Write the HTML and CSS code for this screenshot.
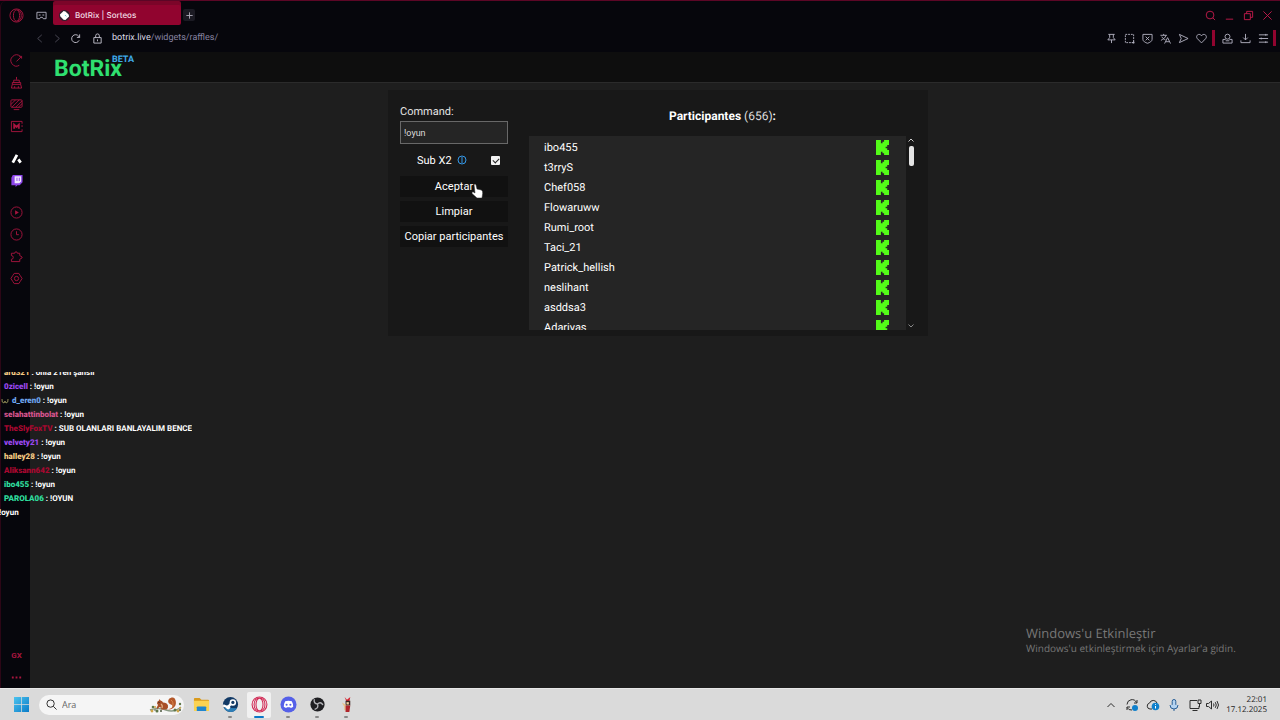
FILE: index.html
```html
<!DOCTYPE html>
<html lang="es">
<head>
  <meta charset="UTF-8">
  <meta name="viewport" content="width=device-width, initial-scale=1">
  <title>BotRix | Sorteos</title>
  <link rel="stylesheet" href="styles.css">
</head>
<body>

<!-- Shared shapes -->
<svg class="defs" aria-hidden="true">
  <symbol id="kick" viewBox="1 0 22 24" preserveAspectRatio="none">
    <path d="M1 0h8.300v5.300H12V2.700h2.700V0H23v8h-3v2.700h-2.700v2.600H20V16h3v8h-8.300v-2.700H12v-2.600H9.300V24H1z"/>
  </symbol>
  <symbol id="opera" viewBox="0 0 16 16">
    <circle cx="8" cy="8" r="7"/>
    <ellipse cx="8" cy="8" rx="3.3" ry="6"/>
    <path d="M9.5 2.2c2.5.8 3.6 3 3.6 5.800s-1.100 5-3.600 5.800"/>
  </symbol>
</svg>

<div class="browser">

  <!-- Sidebar -->
  <nav class="sidebar" aria-label="Sidebar">
    <button class="side logo" aria-label="Opera menu"><svg viewBox="0 0 16 16"><use href="#opera"/></svg></button>
    <button class="side" aria-label="GX Control"><svg viewBox="0 0 14 14"><path d="M10 12.200A6 6 0 1 1 11 2.500M7 8l5-5M12.500 5v-2.500H10"/></svg></button>
    <button class="side" aria-label="Cleaner"><svg viewBox="0 0 14 14"><path d="M7 1v3M4 7V4.500h6V7M2.500 9V7h9v2M2.500 9L1.500 13h11l-1-4zM5 13v-2M9 13v-2"/></svg></button>
    <button class="side" aria-label="Wallpaper"><svg viewBox="0 0 14 14"><rect x="1" y="2" width="12" height="8" rx="1"/><path d="M1 7l5-5M2 10l8-8M6 10l7-7M9 10l4-4M4 12.500h6"/></svg></button>
    <button class="side" aria-label="Mods"><svg viewBox="0 0 14 14"><path d="M13 4V1.500H1.500v11H13V10M12 6.500h2"/><path class="heavy" d="M4.500 9.500V5L7 7.500 9.500 5v4.500"/></svg></button>
    <button class="side gap-m white" aria-label="Aria"><svg viewBox="0 0 14 14"><path class="thick" d="M3 11.500L7.500 3M9 8l2.500 3.500"/></svg></button>
    <button class="side twitch" aria-label="Twitch"><svg viewBox="0 0 14 14"><path class="tw-bg" d="M3 1h10.500v8L10.500 12H8l-2 2v-2H1.500V4z"/><path class="tw-face" d="M5 2.500h7v5.500L10 10H5z"/><path class="tw-eye" d="M7.500 4v3.500M10 4v3.500"/></svg></button>
    <button class="side gap-m" aria-label="Player"><svg viewBox="0 0 14 14"><circle cx="7" cy="7" r="6"/><path class="solid" d="M5.500 4.500v5L9.500 7z"/></svg></button>
    <button class="side" aria-label="History"><svg viewBox="0 0 14 14"><circle cx="7" cy="7" r="6"/><path d="M7 3.500V7.200h2.500"/></svg></button>
    <button class="side" aria-label="Extensions"><svg viewBox="0 0 14 14"><path d="M1.500 3.500h3.500a1.500 1.500 0 0 1 3 0h2.500v2.500l2.500 1.500v1l-2.500 1.500v2.500h-9V10a2 2 0 0 0 0-4z"/></svg></button>
    <button class="side" aria-label="Settings"><svg viewBox="0 0 14 14"><path d="M4.500 1.500h5L11 3.800 13 7l-2 3.200-1.500 2.300h-5L3 10.200 1 7l2-3.200z"/><circle cx="7" cy="7" r="2.300"/></svg></button>
    <button class="side gx" aria-label="GX Corner">GX</button>
    <button class="side" aria-label="More"><svg viewBox="0 0 14 14"><path class="dots" d="M2 7h2M6 7h2M10 7h2"/></svg></button>
  </nav>

  <div class="window">

    <!-- Tabs -->
    <div class="tabs">
      <button class="icon workspace" aria-label="Workspaces"><svg viewBox="0 0 12 12"><path d="M1 2.500h10v7H8L7 8H5L4 9.500H1zM3 5.500h2M7 5.500h2"/></svg></button>
      <div class="tab">
        <svg class="favicon" viewBox="0 0 12 12"><circle cx="6" cy="6" r="6" fill="#33202e"/><path d="M5 1l2 .5L10.500 5l.5 2L7 11 5 10.500 1.500 7 1 5z" fill="#fff"/><path d="M6.500 5.500L8 7" stroke="#56c8d0"/></svg>
        <span>BotRix | Sorteos</span>
      </div>
      <button class="new-tab" aria-label="New tab"><svg viewBox="0 0 10 10"><path d="M5 1.500v7M1.500 5h7"/></svg></button>
      <div class="controls">
        <button class="icon" aria-label="Search tabs"><svg viewBox="0 0 12 12"><circle cx="5.500" cy="5.500" r="4.200"/><path d="M8.500 8.500L11 11"/></svg></button>
        <button class="icon" aria-label="Minimize"><svg viewBox="0 0 12 12"><path d="M2 10h8"/></svg></button>
        <button class="icon" aria-label="Restore"><svg viewBox="0 0 12 12"><path d="M1.500 4h6.500v6.500H1.500zM4 4V1.500h6.500V8H8"/></svg></button>
        <button class="icon" aria-label="Close"><svg viewBox="0 0 12 12"><path d="M1.500 1.500l9 9M10.500 1.500l-9 9"/></svg></button>
      </div>
    </div>

    <!-- Address bar -->
    <div class="toolbar">
      <div class="history">
        <button class="icon dim" aria-label="Back"><svg viewBox="0 0 12 12"><path d="M8.500 2L4 6l4.500 4"/></svg></button>
        <button class="icon dim" aria-label="Forward"><svg viewBox="0 0 12 12"><path d="M3.500 2L8 6l-4.500 4"/></svg></button>
        <button class="icon light" aria-label="Reload"><svg viewBox="0 0 12 12"><path d="M10 8a4.300 4.300 0 1 1-.500-4.500L10.500 4.800M10.500 1.500v3.300H7.500"/></svg></button>
        <button class="icon light lock" aria-label="Site information"><svg viewBox="0 0 12 12"><path d="M2 5h8v6H2zM4 5V3a2 2 0 0 1 4 0v2M6 7v2"/></svg></button>
      </div>
      <a class="url" href="#">botrix.live<span>/widgets/raffles/</span></a>
      <div class="actions">
        <button class="icon" aria-label="Pin"><svg viewBox="0 0 12 12"><path d="M2.500 1.500h7M4 1.500v3.500L2 7.500h8L8 5V1.500M6 7.500V11"/></svg></button>
        <button class="icon" aria-label="Snapshot"><svg viewBox="0 0 12 12"><path stroke-dasharray="2 1" d="M1.500 1.500h9v9h-9z"/><path d="M8.500 10.500h3M10.500 8.500v3"/></svg></button>
        <button class="icon" aria-label="Blocker"><svg viewBox="0 0 12 12"><path d="M1 1.500h10V7c0 2-2.500 3.500-5 4.200C3.500 10.500 1 9 1 7zM4 4l4 4M8 4L4 8"/></svg></button>
        <button class="icon" aria-label="Translate"><svg viewBox="0 0 12 12"><path d="M.5 2.500h7M4 1v1.500M6.500 2.500C6 5 3.500 7 1 8M2 4c1 2 2.500 3 4 3.500M5 11.500L8.300 5l3.200 6.500M6.500 9.500h3.600"/></svg></button>
        <button class="icon" aria-label="Flow"><svg viewBox="0 0 12 12"><path d="M1.500 1.500L11 6l-9.500 4.500L3.500 6z"/></svg></button>
        <button class="icon" aria-label="Bookmark"><svg viewBox="0 0 12 12"><path d="M6 10.800L1.500 6.200C-.3 4 1.200 1.500 3.500 1.500 4.700 1.500 5.500 2.200 6 3c.5-.8 1.300-1.500 2.500-1.500 2.300 0 3.800 2.500 2 4.700z"/></svg></button>
        <i class="bar"></i>
        <button class="icon" aria-label="Profile"><svg viewBox="0 0 12 12"><circle cx="6" cy="4" r="2.700"/><path d="M4 7H1v4h10V7H8M4 8.500h4"/></svg></button>
        <button class="icon" aria-label="Downloads"><svg viewBox="0 0 12 12"><path d="M6 1v6.500M3.500 5L6 7.500 8.500 5M1 8v2.500h10V8"/></svg></button>
        <button class="icon" aria-label="Easy setup"><svg viewBox="0 0 12 12"><path d="M1 2h10M1 6h10M1 10h10M8.500 1v2M3.500 5v2M8.500 9v2"/></svg></button>
        <i class="bar"></i>
      </div>
    </div>

    <!-- BotRix page -->
    <header class="page-header">
      <a class="brand" href="#">BotRix<sup>BETA</sup></a>
    </header>

    <main class="page">
      <section class="card">
        <form class="options">
          <label class="command-label" for="command">Command:</label>
          <input class="command" id="command" type="text" value="!oyun">
          <div class="sub-row">
            <label for="subx2">Sub X2</label>
            <svg class="info" viewBox="0 0 10 10"><circle cx="5" cy="5" r="4"/><path d="M5 2v6"/></svg>
            <input class="check" id="subx2" type="checkbox" checked>
          </div>
          <button class="btn" type="button">Aceptar</button>
          <button class="btn" type="button">Limpiar</button>
          <button class="btn" type="button">Copiar participantes</button>
        </form>

        <div class="participants">
          <h2>Participantes <span>(656)</span>:</h2>
          <div class="list-wrap">
            <ul class="list">
              <li>ibo455<svg><use href="#kick"/></svg></li>
              <li>t3rryS<svg><use href="#kick"/></svg></li>
              <li>Chef058<svg><use href="#kick"/></svg></li>
              <li>Flowaruww<svg><use href="#kick"/></svg></li>
              <li>Rumi_root<svg><use href="#kick"/></svg></li>
              <li>Taci_21<svg><use href="#kick"/></svg></li>
              <li>Patrick_hellish<svg><use href="#kick"/></svg></li>
              <li>neslihant<svg><use href="#kick"/></svg></li>
              <li>asddsa3<svg><use href="#kick"/></svg></li>
              <li>Adariyas<svg><use href="#kick"/></svg></li>
            </ul>
            <div class="scroll">
              <svg viewBox="0 0 8 8"><path d="M1.500 5.500L4 3l2.500 2.500"/></svg>
              <div class="thumb"></div>
              <svg class="down" viewBox="0 0 8 8"><path d="M1.500 2.500L4 5l2.500-2.500"/></svg>
            </div>
          </div>
        </div>
      </section>
    </main>
  </div>
</div>

<!-- Taskbar -->
<footer class="taskbar">
  <button class="start" aria-label="Inicio"><svg viewBox="0 0 16 16">
    <defs><linearGradient id="win" x2="1" y2="1"><stop offset="0" stop-color="#4cc3ee"/><stop offset="1" stop-color="#0a7cc8"/></linearGradient></defs>
    <path fill="url(#win)" d="M0 0h7.600v7.600H0zM8.400 0H16v7.600H8.400zM0 8.400h7.600V16H0zM8.400 8.400H16V16H8.400z"/></svg></button>
  <div class="search">
    <svg class="lens" viewBox="0 0 12 12"><circle cx="5" cy="5" r="4"/><path d="M8 8l3.500 3.500"/></svg>
    <input type="text" placeholder="Ara" aria-label="Ara">
    <svg class="squirrel" viewBox="0 0 34 18">
      <path d="M1 14q8-3 16 0t15-3" stroke="#8a9a84" stroke-width="1.500" fill="none"/>
      <path d="M18 13c5 0 6-2 5-4-3-1-5-3-3-6 2-2 5-2 6 0 2 4 1 9-5 10.500z" fill="#b4592b"/>
      <path d="M22 4q3 2 1.500 7" stroke="#d98a50" stroke-width="1" fill="none"/>
      <path d="M8 7.500Q8 5 10 4.500l.5-1.500 1 1.500q2 .5 2.500 2 4 0 5 3 .5 3-1.500 4h-6l1-1.500-2-1-2 2-1-1 1.500-3z" fill="#a84f28"/>
      <path d="M12 8q2 1.500 1 4" stroke="#e3b083" stroke-width="1.200" fill="none"/>
      <circle cx="10" cy="6.300" r=".6" fill="#222"/>
      <g fill="#5d7648"><circle cx="4" cy="11" r="1.300"/><circle cx="8" cy="15" r="1.500"/><circle cx="26" cy="14" r="1.500"/><circle cx="31" cy="8" r="1.200"/></g>
      <g fill="#cfa548"><circle cx="3" cy="15" r="1.400"/><circle cx="6" cy="11" r="1"/><circle cx="29" cy="15" r="1.400"/><circle cx="31" cy="12" r="1"/></g>
      <g fill="#4b573e"><circle cx="12" cy="15" r="1"/><circle cx="31" cy="14" r="1"/><circle cx="6" cy="14" r=".8"/></g>
    </svg>
  </div>
  <div class="apps">
    <button class="app" aria-label="Explorer"><svg viewBox="0 0 18 18"><path d="M1 3a1 1 0 0 1 1-1h5l2 2h7a1 1 0 0 1 1 1v3H1z" fill="#d99a1c"/><path d="M1 5h16v10a1 1 0 0 1-1 1H2a1 1 0 0 1-1-1z" fill="#fbd352"/><path d="M4 16v-4a1 1 0 0 1 1-1h8a1 1 0 0 1 1 1v4z" fill="#1f86cf"/></svg></button>
    <button class="app running" aria-label="Steam"><svg viewBox="0 0 18 18"><circle cx="9" cy="9" r="8" fill="#123a66"/><path d="M2 12.500A8 8 0 0 0 16 13z" fill="#2d7fb8"/><path d="M1.200 10l5 2 3-3.500" stroke="#fff" stroke-width="2.600" fill="none"/><circle cx="11.500" cy="6.800" r="3.400" fill="#fff"/><circle cx="11.500" cy="6.800" r="1.700" fill="#123a66"/><circle cx="6.500" cy="12" r="2.200" fill="#fff"/></svg></button>
    <button class="app running active" aria-label="Opera GX"><svg class="opera" viewBox="0 0 16 16"><use href="#opera"/><path d="M6.500 2.200C4 3 2.900 5.200 2.900 8s1.100 5 3.600 5.800"/></svg></button>
    <button class="app running" aria-label="Discord"><svg viewBox="0 0 18 18"><circle cx="9" cy="9" r="8.500" fill="#5560e8"/><path d="M5.500 5.500Q9 4.300 12.500 5.500 14 8 14 11.500q-1.200 1-2.600 1.300l-.7-1q-1.700.4-3.400 0l-.7 1Q5.200 12.500 4 11.500 4 8 5.500 5.500z" fill="#fff"/><circle cx="7" cy="9.200" r="1.100" fill="#5560e8"/><circle cx="11" cy="9.200" r="1.100" fill="#5560e8"/></svg></button>
    <button class="app running" aria-label="OBS"><svg viewBox="0 0 18 18"><circle cx="9" cy="9" r="7.500" fill="#1f1f22"/><path d="M9 8.500Q5 8 5.500 4M9 8.500q1.500 4-2.500 5.500M9 8.500q3-3 5.500.500" stroke="#b4b4b8" stroke-width="1.400" fill="none" stroke-linecap="round"/></svg></button>
    <button class="app running" aria-label="Game"><svg viewBox="0 0 18 18"><path d="M7 1l2.500 3L13 1l-1 5H9z" fill="#d3222e"/><path d="M8 5h5v5H8z" fill="#3a2622"/><path d="M4 7l4 2v6H6.500V11z" fill="#e9c28a"/><path d="M8 10h5l-1 7H8z" fill="#b0242a"/><path d="M9 6.500h2.500v2.500H9z" fill="#efd09c"/></svg></button>
  </div>
  <div class="tray">
    <svg viewBox="0 0 14 14"><path d="M3.500 9L7 5.500 10.500 9"/></svg>
    <svg viewBox="0 0 14 14"><path d="M2 6.500A5 5 0 0 1 11.500 4.500M12 2v3H9M2 12V9h3M2 9.500A5 5 0 0 0 7 12"/><circle class="badge" cx="10" cy="10" r="3"/></svg>
    <svg viewBox="0 0 14 14"><path d="M6 11H4a3 3 0 0 1-.500-5.900A4 4 0 0 1 11 5"/><circle class="badge" cx="9.500" cy="8.500" r="3.800"/><path class="mark" d="M9.500 8v2.500M9.500 6.200v.8"/></svg>
    <svg class="mic" viewBox="0 0 14 14"><rect x="5.200" y="1.500" width="3.600" height="7" rx="1.800"/><path d="M3 7a4 4 0 0 0 8 0M7 11v2"/></svg>
    <svg viewBox="0 0 14 14"><path d="M9 2.500H2v8h9V8M4.500 12.500h5M10 2h3v3.500h-3zM11.500 5.500V9"/></svg>
    <svg viewBox="0 0 14 14"><path d="M1.500 5.500h2L6.500 3v8L3.500 8.500h-2zM8.500 5.500q1 1.500 0 3M10.300 4.200q2 2.800 0 5.600M12 3q3 4 0 8"/></svg>
  </div>
  <time class="clock" datetime="2025-12-17T22:01">22:01<br>17.12.2025</time>
</footer>

<!-- Stream chat overlay -->
<div class="chat">
  <p><b class="sand">ard321</b> : onla 21en şanslı</p>
  <p><b class="violet">0zicell</b> : !oyun</p>
  <p class="badged"><svg viewBox="0 0 8 8"><path d="M1 2q-.5 4 2 4l1-2 1 2q2.500 0 2-4"/></svg><b class="blue">d_eren0</b> : !oyun</p>
  <p><b class="pink">selahattinbolat</b> : !oyun</p>
  <p><b class="red">TheSlyFoxTV</b> : SUB OLANLARI BANLAYALIM BENCE</p>
  <p><b class="violet">velvety21</b> : !oyun</p>
  <p><b class="sand">halley28</b> : !oyun</p>
  <p><b class="red">Aliksann642</b> : !oyun</p>
  <p><b class="mint">ibo455</b> : !oyun</p>
  <p><b class="mint">PAROLA06</b> : !OYUN</p>
  <p class="wrapped">!oyun</p>
</div>

<!-- Windows watermark -->
<div class="watermark">
  <p class="wm-title">Windows'u Etkinleştir</p>
  <p>Windows'u etkinleştirmek için Ayarlar'a gidin.</p>
</div>

<!-- Mouse pointer -->
<svg class="pointer" viewBox="0 0 12 16"><path d="M3 1.500Q4.200.3 5 1.800L6 6l4.500 1Q12 8 11.700 10.500L11 15H6L1 10.500Q.5 9 2 8.800L4 10z" fill="#fff" stroke="#222" stroke-width=".5"/></svg>

</body>
</html>
```

FILE: styles.css
```css
* {
  margin: 0;
  padding: 0;
  box-sizing: border-box;
}

body {
  font-family: Roboto, "Liberation Sans", sans-serif;
  font-size: 11px;
  text-rendering: geometricPrecision;
  background: #1e1e1e;
  color: #fff;
  height: 100vh;
  overflow: hidden;
  display: flex;
  flex-direction: column;
  position: relative;
}

button {
  font: inherit;
  color: inherit;
  background: none;
  border: none;
  cursor: pointer;
}

a {
  color: inherit;
  text-decoration: none;
}

svg {
  display: block;
  fill: none;
  stroke-width: 1;
}

.defs {
  position: absolute;
  width: 0;
  height: 0;
}

.browser {
  flex: 1;
  min-height: 0;
  display: flex;
  background: #06060c;
  border-top: 1px solid #5c0626;
}

/* Sidebar */
.sidebar {
  width: 30px;
  display: flex;
  flex-direction: column;
  align-items: center;
  padding: 3px 0 0 2px;
  border-left: 1px solid #2c0616;
  border-top-left-radius: 6px;
}

.side {
  width: 22px;
  height: 22px;
  flex: none;
  display: flex;
  align-items: center;
  justify-content: center;
  color: #a8153f;
}

.side svg {
  width: 13px;
  height: 13px;
  stroke: currentColor;
}

.logo {
  margin-bottom: 23px;
}

.logo svg {
  width: 15px;
  height: 15px;
}

.gap-m {
  margin-top: 10px;
}

.white {
  color: #fff;
}

.side .thick {
  stroke-width: 3;
}

.side .heavy {
  stroke-width: 2;
}

.side .solid {
  fill: currentColor;
  stroke: none;
}

.side .dots {
  stroke-width: 2;
}

.tw-bg {
  fill: #8c45e8;
  stroke: none;
}

.tw-face {
  fill: #f0e6ff;
  stroke: none;
}

.tw-eye {
  stroke: #8c45e8;
}

.gx {
  margin-top: auto;
  font-size: 8px;
  font-weight: 700;
}

/* Tabs */
.window {
  flex: 1;
  min-width: 0;
  display: flex;
  flex-direction: column;
}

.tabs {
  height: 25px;
  display: flex;
  align-items: center;
  padding: 3px 4px 0 5px;
}

.icon {
  width: 18px;
  height: 18px;
  display: flex;
  align-items: center;
  justify-content: center;
  color: #b4b2c2;
}

.icon svg {
  width: 11px;
  height: 11px;
  stroke: currentColor;
}

.workspace {
  width: 12px;
}

.tab {
  width: 128px;
  height: 20px;
  margin-left: 6px;
  padding-left: 6px;
  display: flex;
  align-items: center;
  gap: 5px;
  background: #91042f;
  border-radius: 2px;
  box-shadow: 0 -4px #7c0529;
  font-family: Inter, sans-serif;
  font-size: 8px;
  font-weight: 500;
  color: #f3dfe6;
}

.favicon {
  width: 11px;
  height: 11px;
}

.new-tab {
  width: 12px;
  height: 12px;
  margin-left: 2px;
  display: flex;
  align-items: center;
  justify-content: center;
  background: #1b1a23;
  border-radius: 2px;
}

.new-tab svg {
  width: 9px;
  height: 9px;
  stroke: #b0aebb;
}

.controls {
  margin-left: auto;
  display: flex;
  gap: 1px;
}

.controls .icon {
  color: #c41a4b;
}

/* Address bar */
.toolbar {
  height: 26px;
  display: flex;
  align-items: center;
  padding: 0 4px 2px 0;
}

.history {
  display: flex;
  align-items: center;
}

.toolbar .dim {
  color: #4d4b58;
}

.toolbar .light {
  color: #c5c3cf;
}

.toolbar .lock {
  margin: 0 6px 0 4px;
}

.url {
  font-size: 9px;
  color: #dddbe6;
}

.url span {
  color: #8683a0;
}

.actions {
  margin-left: auto;
  display: flex;
  align-items: center;
}

.bar {
  width: 3px;
  height: 16px;
  margin: 0 3px 0 2px;
  background: #91042f;
}

.bar:last-child {
  margin: 0 0 0 1px;
}

/* Page */
.page-header {
  height: 31px;
  padding-left: 24px;
  background: #0e0e0e;
  border-bottom: 1px solid #2b2b2b;
}

.brand {
  display: flex;
  align-items: flex-start;
  font-size: 23px;
  line-height: 34px;
  font-weight: 700;
  color: #2fe070;
}

.brand sup {
  margin-left: -10px;
  font-size: 9px;
  line-height: 16px;
  color: #3fa9e8;
}

.page {
  flex: 1;
  padding: 7px 0 0 6px;
  background: #1e1e1e;
}

.card {
  max-width: 540px;
  margin: 0 auto;
  padding: 12px 12px 6px 12px;
  display: flex;
  gap: 21px;
  background: #181818;
}

.options {
  width: 108px;
  flex: none;
}

.command-label {
  display: block;
  height: 19px;
  line-height: 20px;
  color: #e3e3e3;
}

.command {
  display: block;
  width: 100%;
  height: 23px;
  padding: 0 3px;
  font: 9px Roboto, sans-serif;
  color: #dcdcdc;
  background: #252525;
  border: 1px solid #686868;
}

.sub-row {
  height: 32px;
  padding: 0 8px 0 17px;
  display: flex;
  align-items: center;
  gap: 5px;
}

.info {
  width: 10px;
  height: 10px;
  stroke: #3498e8;
}

.check {
  appearance: none;
  width: 9px;
  height: 9px;
  margin-left: auto;
  display: grid;
  place-items: center;
  background: #f2f2f2;
  border-radius: 1px;
}

.check:checked::before {
  content: "";
  width: 5px;
  height: 3px;
  border: solid #222;
  border-width: 0 0 1px 1px;
  transform: rotate(-45deg);
}

.btn {
  display: block;
  width: 100%;
  height: 21px;
  margin-bottom: 4px;
  background: #111;
  white-space: nowrap;
}

.participants {
  flex: 1;
  min-width: 0;
}

.participants h2 {
  height: 34px;
  line-height: 29px;
  text-align: center;
  font-size: 12px;
  font-weight: 700;
}

.participants h2 span {
  font-weight: 400;
  color: #ddd;
}

.list-wrap {
  height: 194px;
  display: flex;
}

.list {
  flex: 1;
  overflow: hidden;
  padding-top: 1px;
  list-style: none;
  background: #252525;
}

.list li {
  height: 20px;
  padding: 0 17px 0 15px;
  display: flex;
  align-items: center;
  justify-content: space-between;
}

.list svg {
  width: 13px;
  height: 15px;
  fill: #53fc18;
}

.scroll {
  width: 10px;
  display: flex;
  flex-direction: column;
  align-items: center;
}

.scroll svg {
  width: 8px;
  height: 8px;
  stroke: #ccc;
}

.thumb {
  width: 5px;
  height: 20px;
  margin-top: 2px;
  background: #e4e4e4;
  border-radius: 2px;
}

.scroll .down {
  margin-top: auto;
  stroke: #888;
}

/* Taskbar */
.taskbar {
  height: 32px;
  display: flex;
  align-items: center;
  padding: 0 13px 0 14px;
  background: #dadada;
  border-top: 1px solid #e8e8e8;
  color: #222;
}

.start svg {
  width: 15px;
  height: 15px;
}

.search {
  width: 145px;
  height: 20px;
  margin-left: 10px;
  padding: 0 1px 0 7px;
  display: flex;
  align-items: center;
  background: #f5f5f5;
  border-radius: 10px;
}

.lens {
  width: 11px;
  height: 11px;
  flex: none;
  stroke: #222;
}

.search input {
  flex: 1;
  min-width: 0;
  margin-left: 5px;
  font: 9px "Open Sans", sans-serif;
  background: none;
  border: none;
}

.search input::placeholder {
  color: #666;
}

.squirrel {
  width: 34px;
  height: 18px;
}

.apps {
  display: flex;
  gap: 5px;
  margin-left: 5px;
}

.app {
  width: 24px;
  height: 26px;
  position: relative;
  display: flex;
  align-items: center;
  justify-content: center;
  border-radius: 2px;
}

.app svg {
  width: 17px;
  height: 17px;
}

.app .opera {
  stroke: #d12a55;
}

.running::after {
  content: "";
  position: absolute;
  bottom: 0;
  width: 4px;
  height: 2px;
  background: #888;
  border-radius: 1px;
}

.active {
  background: #f1f1f1;
}

.active::after {
  width: 10px;
  background: #0b78c8;
}

.tray {
  margin-left: auto;
  display: flex;
  gap: 7px;
}

.tray svg {
  width: 14px;
  height: 14px;
  stroke: #2c2c2c;
}

.tray .badge {
  fill: #0f80cc;
  stroke: none;
}

.tray .mark {
  stroke: #fff;
}

.tray .mic {
  stroke: #2b6096;
  fill: #b5d3f0;
}

.tray svg:last-child {
  margin-left: -4px;
}

.clock {
  width: 48px;
  font: 8px/10px "Open Sans", sans-serif;
  text-align: right;
}

/* Stream chat */
.chat {
  position: absolute;
  left: 0;
  top: 372px;
  height: 147px;
  padding-left: 4px;
  overflow: hidden;
  display: flex;
  flex-direction: column;
  font-size: 8px;
  font-weight: 700;
  line-height: 14px;
  white-space: nowrap;
}

/* oldest message scrolls out under the top edge */
.chat p:first-child {
  margin-top: -6px;
}

.badged {
  display: flex;
  align-items: center;
  margin-left: -3px;
  white-space: pre;
}

.chat .badged {
  margin-left: -3px;
}

.badged svg {
  width: 8px;
  height: 8px;
  margin-right: 3px;
  stroke: #8f8a55;
}

.wrapped {
  margin-left: -5px;
}

.sand { color: #f2c983; }
.violet { color: #9a48f0; }
.blue { color: #6da5ee; }
.pink { color: #d4548c; }
.red { color: #a80830; }
.mint { color: #2fdc9c; }

/* Watermark */
.watermark {
  position: absolute;
  right: 54px;
  bottom: 64px;
  width: 200px;
  font: 10px/15px "Open Sans", sans-serif;
  color: #777;
  white-space: nowrap;
}

.wm-title {
  font-size: 13px;
}

.pointer {
  position: absolute;
  left: 471px;
  top: 183px;
  width: 12px;
  height: 16px;
}
```
